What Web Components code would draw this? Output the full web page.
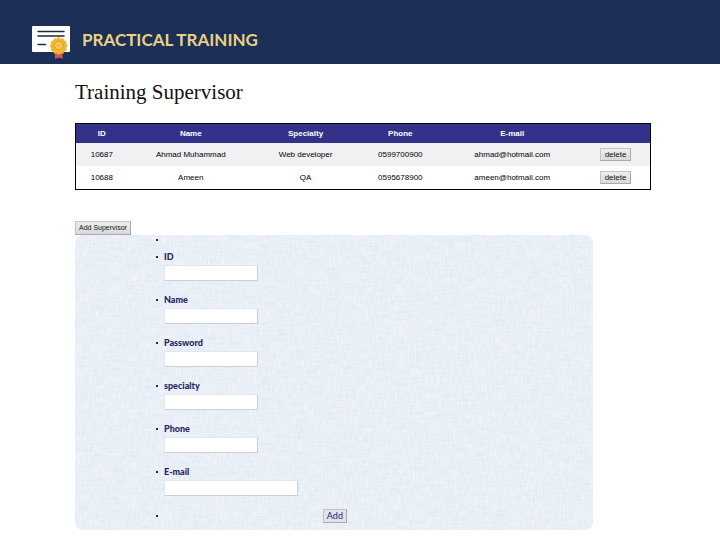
<!DOCTYPE html>
<html lang="en">
<head>
<meta charset="utf-8">
<title>Practical Training</title>
<style>
body { margin: 0; background: #fff; font-family: "Liberation Sans", sans-serif; color: #111; }
main { padding: 16px 69px 10px 75px; }
h1 { margin: 0 0 19px; font: 400 21px/24px "Liberation Serif", serif; }
form-panel { width: 90%; }
push-button.add { margin-top: 31px; }
</style>
</head>
<body>
<page-header>PRACTICAL TRAINING</page-header>
<main>
  <h1>Training Supervisor</h1>
  <supervisor-table></supervisor-table>
  <push-button class="add" size="small">Add Supervisor</push-button>
  <form-panel></form-panel>
</main>
<script>
class BaseElement extends HTMLElement {
  constructor() {
    super();
    this.attachShadow({ mode: 'open' }).innerHTML = this.constructor.markup;
  }
}

customElements.define('page-header', class extends BaseElement {
  static markup = `
    <style>
      :host { display: block; }
      header { display: flex; align-items: center; gap: 12px; height: 64px; padding: 0 32px; box-sizing: border-box; background: #1c2f56; }
      svg { flex: none; margin-top: 21px; }
      span { margin-top: 16px; font: 700 17px/20px Lato, sans-serif; color: #ebd182; }
    </style>
    <header>
      <svg width="38" height="34" viewBox="0 0 38 34" aria-hidden="true">
        <rect width="38" height="26" rx="1" fill="#fff"/>
        <path d="M6 5.5H32M6 10H32M6 18.5H13.500" stroke="#1c2942" stroke-width="1.500" stroke-linecap="round"/>
        <path d="M23 24H30.500V33L26.750 31.500L23 33Z" fill="#d65158"/>
        <path d="M26.750 11l2 1.500 2.500-.3 1 2.300 2.300 1-.3 2.500 1.500 2-1.500 2 .3 2.400-2.300 1-1 2.300-2.500-.3-2 1.500-2-1.500-2.500.3-1-2.300-2.300-1 .3-2.400-1.500-2 1.500-2-.3-2.500 2.300-1 1-2.300 2.500.3z" fill="#f2b62e"/>
        <circle cx="26.750" cy="19.500" r="4.300" fill="#f5c757" stroke="#dda02a"/>
        <circle cx="26.750" cy="19.500" r="1.500" fill="#edb544"/>
      </svg>
      <span><slot></slot></span>
    </header>`;
});

customElements.define('push-button', class extends BaseElement {
  static markup = `
    <style>
      :host { display: block; width: max-content; }
      button { display: block; box-sizing: border-box; height: 13px; margin: 0; padding: 0 4px; border: 1px solid #c4c4c4; border-right-color: #aaa; border-bottom-color: #aaa; background: linear-gradient(#eee, #d9d9d9); font: 8px/11px "Liberation Sans", sans-serif; color: #111; white-space: nowrap; }
      :host([size="small"]) button { height: 14px; padding: 0 3px; font-size: 7px; line-height: 12px; }
      :host([tone="navy"]) button { height: 14px; padding: 0 3px; background: #e3e2ee; color: #26265e; font: 9px/12px Lato, sans-serif; }
    </style>
    <button type="button"><slot></slot></button>`;
});

customElements.define('supervisor-table', class extends BaseElement {
  static markup = `
    <style>
      :host { display: block; }
      table { width: 100%; box-sizing: border-box; table-layout: fixed; border-collapse: separate; border-spacing: 0; border: 1px solid #000; font: 8px/10px "Liberation Sans", sans-serif; }
      th, td { padding: 0; text-align: center; white-space: nowrap; }
      th { height: 19px; background: #32328a; color: #fff; font-weight: 700; }
      td { height: 23px; color: #000; }
      tbody tr:nth-child(odd) td { background: #f1f0f2; }
      push-button { margin: auto; }
    </style>
    <table>
      <colgroup><col style="width:9%"><col style="width:22%"><col style="width:18%"><col style="width:15%"><col style="width:24%"><col style="width:12%"></colgroup>
      <thead><tr><th>ID</th><th>Name</th><th>Specialty</th><th>Phone</th><th>E-mail</th><th></th></tr></thead>
      <tbody>
        <tr><td>10687</td><td>Ahmad Muhammad</td><td>Web developer</td><td>0599700900</td><td>ahmad@hotmail.com</td><td><push-button>delete</push-button></td></tr>
        <tr><td>10688</td><td>Ameen</td><td>QA</td><td>0595678900</td><td>ameen@hotmail.com</td><td><push-button>delete</push-button></td></tr>
      </tbody>
    </table>`;
});

customElements.define('form-field', class extends BaseElement {
  static markup = `
    <style>
      :host { display: block; }
      label { display: block; font: 900 9px/12px Lato, sans-serif; color: #26265e; }
      input { display: block; box-sizing: border-box; width: 94px; height: 16px; margin: 2px 0 0; padding: 0 3px; border: 1px solid #e3e7ee; border-right-color: #ccd0d8; border-bottom-color: #ccd0d8; background: #fff; font-size: 9px; }
      :host([wide]) input { width: 134px; }
    </style>
    <label for="control"></label>
    <input id="control">`;
  connectedCallback() {
    this.shadowRoot.querySelector('label').textContent = this.getAttribute('label');
    this.shadowRoot.querySelector('input').type = this.getAttribute('type') || 'text';
  }
});

customElements.define('form-panel', class extends BaseElement {
  static markup = `
    <style>
      :host { display: block; }
      form { position: relative; overflow: hidden; border-radius: 8px; background: #e9eff7; }
      .weave { position: absolute; inset: 0; width: 100%; height: 100%; }
      ul { position: relative; list-style: none; margin: 0; padding: 0 0 7px 81px; }
      li { display: grid; grid-template-columns: 8px 1fr; min-height: 43px; }
      li::before { content: ""; width: 2px; height: 2px; margin-top: 5px; background: #26265e; }
      li.lead { min-height: 16px; }
      li.lead::before { margin-top: 4px; }
      li.action { min-height: 14px; }
      li.action::before { margin-top: 6px; }
      li.action push-button { margin-left: 37%; }
    </style>
    <form>
      <svg class="weave" aria-hidden="true">
        <filter id="across" x="0" y="0" width="100%" height="100%">
          <feTurbulence type="fractalNoise" baseFrequency="0.06 0.6" numOctaves="2" seed="4"/>
          <feColorMatrix values="0 0 0 0 .74  0 0 0 0 .8  0 0 0 0 .88  2 0 0 0 -.82"/>
        </filter>
        <filter id="down" x="0" y="0" width="100%" height="100%">
          <feTurbulence type="fractalNoise" baseFrequency="0.6 0.12" numOctaves="2" seed="9"/>
          <feColorMatrix values="0 0 0 0 1  0 0 0 0 1  0 0 0 0 1  1 0 0 0 -.4"/>
        </filter>
        <rect width="100%" height="100%" filter="url(#across)"/>
        <rect width="100%" height="100%" filter="url(#down)"/>
      </svg>
      <ul>
        <li class="lead"></li>
        <li><form-field label="ID"></form-field></li>
        <li><form-field label="Name"></form-field></li>
        <li><form-field label="Password" type="password"></form-field></li>
        <li><form-field label="specialty"></form-field></li>
        <li><form-field label="Phone" type="tel"></form-field></li>
        <li><form-field label="E-mail" type="email" wide></form-field></li>
        <li class="action"><push-button tone="navy">Add</push-button></li>
      </ul>
    </form>`;
});
</script>
</body>
</html>
